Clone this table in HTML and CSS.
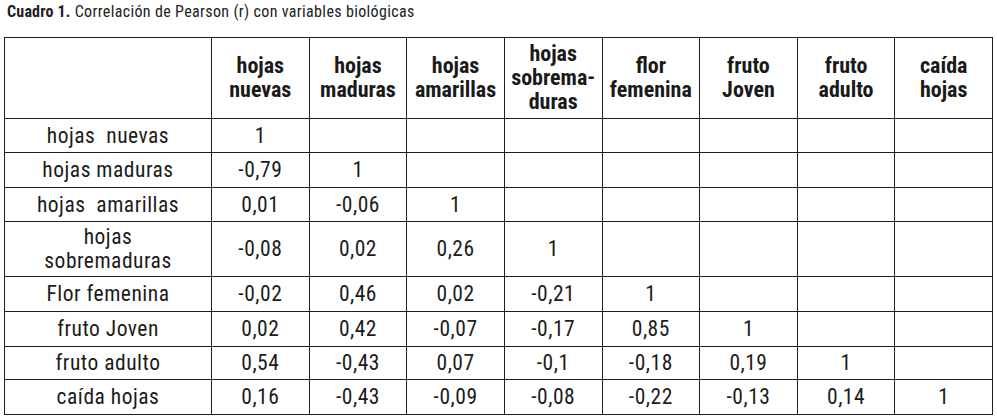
FILE: index.html
```html
<!DOCTYPE html>
<html lang="es">
<head>
<meta charset="utf-8">
<title>Cuadro 1</title>
<link rel="stylesheet" href="styles.css">
</head>
<body>
<p class="caption"><b>Cuadro 1.</b> Correlación de Pearson (r) con variables biológicas</p>
<table class="corr">
  <thead>
    <tr class="head">
      <th class="rowhead"></th>
      <th>hojas<br>nuevas</th>
      <th>hojas<br>maduras</th>
      <th>hojas<br>amarillas</th>
      <th>hojas<br>sobrema-<br>duras</th>
      <th>flor<br>femenina</th>
      <th>fruto<br>Joven</th>
      <th>fruto<br>adulto</th>
      <th>caída<br>hojas</th>
    </tr>
  </thead>
  <tbody>
    <tr class="r34"><td class="rowhead">hojas&nbsp; nuevas</td><td>1</td><td></td><td></td><td></td><td></td><td></td><td></td><td></td></tr>
    <tr class="r35"><td class="rowhead">hojas maduras</td><td>-0,79</td><td>1</td><td></td><td></td><td></td><td></td><td></td><td></td></tr>
    <tr class="r34"><td class="rowhead">hojas&nbsp; amarillas</td><td>0,01</td><td>-0,06</td><td>1</td><td></td><td></td><td></td><td></td><td></td></tr>
    <tr class="r55"><td class="rowhead">hojas<br>sobremaduras</td><td>-0,08</td><td>0,02</td><td>0,26</td><td>1</td><td></td><td></td><td></td><td></td></tr>
    <tr class="r35"><td class="rowhead">Flor femenina</td><td>-0,02</td><td>0,46</td><td>0,02</td><td>-0,21</td><td>1</td><td></td><td></td><td></td></tr>
    <tr class="r35"><td class="rowhead">fruto Joven</td><td>0,02</td><td>0,42</td><td>-0,07</td><td>-0,17</td><td>0,85</td><td>1</td><td></td><td></td></tr>
    <tr class="r33"><td class="rowhead">fruto adulto</td><td>0,54</td><td>-0,43</td><td>0,07</td><td>-0,1</td><td>-0,18</td><td>0,19</td><td>1</td><td></td></tr>
    <tr class="r35"><td class="rowhead">caída hojas</td><td>0,16</td><td>-0,43</td><td>-0,09</td><td>-0,08</td><td>-0,22</td><td>-0,13</td><td>0,14</td><td>1</td></tr>
  </tbody>
</table>
</body>
</html>
```
FILE: styles.css
```css
html, body {
  margin: 0;
  padding: 0;
  background: #ffffff;
}
body {
  font-family: "Roboto", "Liberation Sans", sans-serif;
  font-stretch: condensed;
  color: #1c1c1c;
}
.caption {
  margin: 0;
  padding: 2px 0 0 7px;
  font-size: 16px;
  line-height: 19px;
  letter-spacing: 0.35px;
  color: #222;
}
.caption b {
  font-weight: 700;
  letter-spacing: 0.2px;
}
.corr {
  margin: 16px 0 0 4px;
  width: 989px;
  border-collapse: collapse;
  table-layout: fixed;
}
.corr th,
.corr td {
  border: 1px solid #1e1e1e;
  padding: 0 2px;
  text-align: center;
  vertical-align: middle;
}
.corr th {
  font-weight: 700;
  font-size: 22px;
  line-height: 24px;
  color: #1a1a1a;
}
.corr th.rowhead {
  width: 202px;
}
.corr td {
  font-size: 21.5px;
  line-height: 22px;
  letter-spacing: 0.5px;
  font-weight: 400;
}
.head { height: 81px; }
.r33 { height: 33px; }
.r34 { height: 34px; }
.r35 { height: 35px; }
.r55 { height: 55px; }
.r55 td { line-height: 24px; }
```
